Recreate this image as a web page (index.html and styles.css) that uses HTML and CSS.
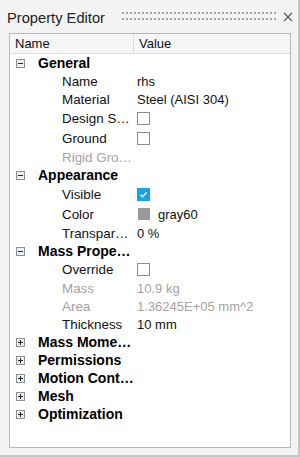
FILE: index.html
```html
<!DOCTYPE html>
<html>
<head>
<meta charset="utf-8">
<link rel="stylesheet" href="styles.css">
</head>
<body>
<div class="window">
  <div class="titlebar">
    <span class="title">Property Editor</span>
    <svg class="grip" width="154" height="8" viewBox="0 0 154 8">
      <defs>
        <pattern id="dots" width="4" height="6" patternUnits="userSpaceOnUse">
          <rect x="0" y="0" width="2" height="2" fill="#a8a8a8"/>
        </pattern>
      </defs>
      <rect x="0" y="0" width="154" height="8" fill="url(#dots)"/>
    </svg>
    <svg class="close" width="10" height="10" viewBox="0 0 10 10">
      <path d="M1 1 L9 9 M9 1 L1 9" stroke="#5a5a5a" stroke-width="1.2" fill="none"/>
    </svg>
  </div>
  <div class="panel">
    <div class="header">
      <div class="hcol name-col">Name</div>
      <div class="hcol value-col">Value</div>
    </div>
    <div class="tree">
      <div class="row group"><span class="exp"><svg width="9" height="9" viewBox="0 0 9 9"><rect x="0.5" y="0.5" width="8" height="8" fill="#eef0f3" stroke="#8a8e96"/><path d="M2 4.5 H7" stroke="#222" stroke-width="1"/></svg></span><span class="glabel">General</span></div>
      <div class="row"><span class="label">Name</span><span class="value">rhs</span></div>
      <div class="row"><span class="label">Material</span><span class="value">Steel (AISI 304)</span></div>
      <div class="row tall"><span class="label">Design S…</span><span class="value"><span class="cb"></span></span></div>
      <div class="row tall"><span class="label">Ground</span><span class="value"><span class="cb"></span></span></div>
      <div class="row dis"><span class="label">Rigid Gro…</span><span class="value"></span></div>

      <div class="row group"><span class="exp"><svg width="9" height="9" viewBox="0 0 9 9"><rect x="0.5" y="0.5" width="8" height="8" fill="#eef0f3" stroke="#8a8e96"/><path d="M2 4.5 H7" stroke="#222" stroke-width="1"/></svg></span><span class="glabel">Appearance</span></div>
      <div class="row tall"><span class="label">Visible</span><span class="value"><span class="cb checked"><svg width="13" height="13" viewBox="0 0 13 13"><path d="M3.5 6.8 L5.6 8.8 L9.6 4.4" stroke="#fff" stroke-width="1.4" fill="none"/></svg></span></span></div>
      <div class="row tall"><span class="label">Color</span><span class="value"><span class="swatch"></span>gray60</span></div>
      <div class="row"><span class="label">Transpar…</span><span class="value">0 %</span></div>

      <div class="row group"><span class="exp"><svg width="9" height="9" viewBox="0 0 9 9"><rect x="0.5" y="0.5" width="8" height="8" fill="#eef0f3" stroke="#8a8e96"/><path d="M2 4.5 H7" stroke="#222" stroke-width="1"/></svg></span><span class="glabel">Mass Prope…</span></div>
      <div class="row mid"><span class="label">Override</span><span class="value"><span class="cb"></span></span></div>
      <div class="row dis"><span class="label">Mass</span><span class="value">10.9 kg</span></div>
      <div class="row dis"><span class="label">Area</span><span class="value">1.36245E+05 mm^2</span></div>
      <div class="row"><span class="label">Thickness</span><span class="value">10 mm</span></div>

      <div class="row group"><span class="exp"><svg width="9" height="9" viewBox="0 0 9 9"><rect x="0.5" y="0.5" width="8" height="8" fill="#eef0f3" stroke="#8a8e96"/><path d="M2 4.5 H7 M4.5 2 V7" stroke="#222" stroke-width="1"/></svg></span><span class="glabel">Mass Mome…</span></div>
      <div class="row group"><span class="exp"><svg width="9" height="9" viewBox="0 0 9 9"><rect x="0.5" y="0.5" width="8" height="8" fill="#eef0f3" stroke="#8a8e96"/><path d="M2 4.5 H7 M4.5 2 V7" stroke="#222" stroke-width="1"/></svg></span><span class="glabel">Permissions</span></div>
      <div class="row group"><span class="exp"><svg width="9" height="9" viewBox="0 0 9 9"><rect x="0.5" y="0.5" width="8" height="8" fill="#eef0f3" stroke="#8a8e96"/><path d="M2 4.5 H7 M4.5 2 V7" stroke="#222" stroke-width="1"/></svg></span><span class="glabel">Motion Cont…</span></div>
      <div class="row group"><span class="exp"><svg width="9" height="9" viewBox="0 0 9 9"><rect x="0.5" y="0.5" width="8" height="8" fill="#eef0f3" stroke="#8a8e96"/><path d="M2 4.5 H7 M4.5 2 V7" stroke="#222" stroke-width="1"/></svg></span><span class="glabel">Mesh</span></div>
      <div class="row group"><span class="exp"><svg width="9" height="9" viewBox="0 0 9 9"><rect x="0.5" y="0.5" width="8" height="8" fill="#eef0f3" stroke="#8a8e96"/><path d="M2 4.5 H7 M4.5 2 V7" stroke="#222" stroke-width="1"/></svg></span><span class="glabel">Optimization</span></div>
    </div>
  </div>
</div>
</body>
</html>
```
FILE: styles.css
```css
* { box-sizing: border-box; }
html, body { margin: 0; padding: 0; }
body {
  width: 300px;
  height: 457px;
  background: #f3f3f3;
  font-family: "Liberation Sans", Arial, sans-serif;
  font-size: 13px;
  color: #111;
  overflow: hidden;
}
.window {
  width: 300px;
  height: 457px;
  border-right: 2px solid #c6c6c6;
  border-bottom: 2px solid #c6c6c6;
  display: flex;
  flex-direction: column;
}
.titlebar {
  height: 33px;
  display: flex;
  align-items: center;
  padding: 2px 0 0 7px;
}
.title {
  font-family: "Liberation Sans", Arial, sans-serif;
  font-size: 14.7px;
  color: #222;
  width: 115px;
}
.grip {
  display: block;
  margin-top: -3px;
}
.close {
  display: block;
  margin-left: 7px;
  margin-top: -2px;
}
.panel {
  margin: 0 0 0 9px;
  width: 282px;
  height: 415px;
  background: #fff;
  border: 1px solid #b9b9b9;
  display: flex;
  flex-direction: column;
}
.header {
  height: 20px;
  display: flex;
  background: #f6f6f6;
  border-bottom: 1px solid #dcdcdc;
}
.hcol {
  display: flex;
  align-items: center;
  color: #111;
}
.name-col {
  width: 124px;
  padding-left: 5px;
  border-right: 1px solid #dcdcdc;
}
.value-col {
  padding-left: 5px;
}
.tree {
  display: flex;
  flex-direction: column;
}
.row {
  height: 18px;
  display: flex;
  align-items: center;
}
.row.tall { height: 20px; }
.row.mid { height: 19px; }
.exp {
  width: 9px;
  height: 9px;
  margin-left: 6px;
  margin-right: 13px;
  display: flex;
}
.exp svg { display: block; }
.glabel {
  font-weight: bold;
  font-size: 14px;
  color: #000;
}
.label {
  width: 127px;
  padding-left: 52px;
  white-space: nowrap;
  overflow: hidden;
  font-size: 13.4px;
}
.value {
  display: flex;
  align-items: center;
  white-space: nowrap;
}
.dis { color: #a3a3a3; }
.cb {
  width: 13px;
  height: 13px;
  border: 1px solid #8a8a8a;
  background: #fff;
  display: block;
}
.cb.checked {
  border: none;
  background: #1ba1e2;
}
.cb.checked svg { display: block; }
.swatch {
  width: 12px;
  height: 12px;
  background: #999;
  margin: 0 8px 0 1px;
}
```
